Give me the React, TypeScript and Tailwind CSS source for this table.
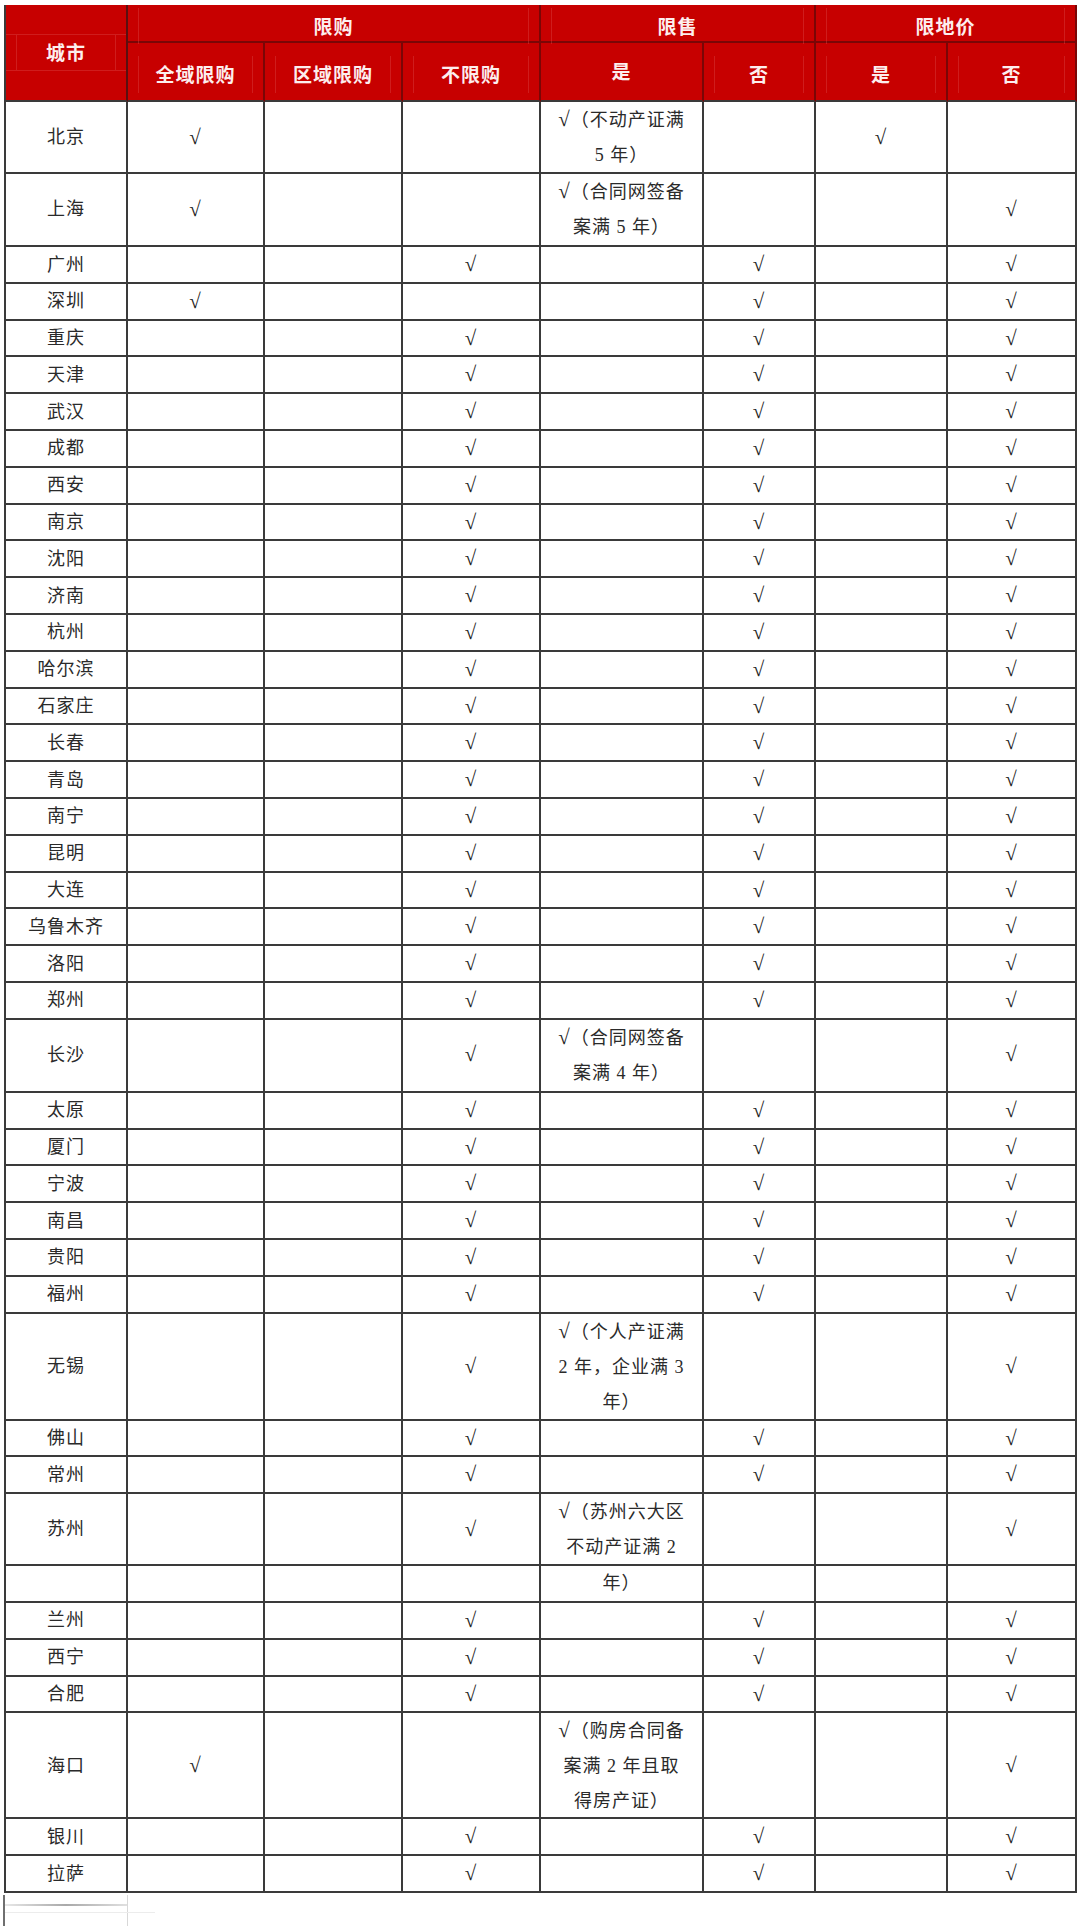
const COLS = "grid grid-cols-[122px_137px_138px_138px_163px_112px_132px_129px]";
const LINE = "border-[#3a3a3a]";
const V = "√";

type Cell = string | string[];

interface Row {
  city: string;
  cells: Cell[];
  h: string;
}

const STD: Cell[] = ["", "", V, "", V, "", V];

const single = (city: string): Row => ({ city, cells: STD, h: "h-[36.8px]" });

const ROWS: Row[] = [
  { city: "北京", cells: [V, "", "", ["√（不动产证满", "5 年）"], "", V, ""], h: "h-[72px]" },
  { city: "上海", cells: [V, "", "", ["√（合同网签备", "案满 5 年）"], "", "", V], h: "h-[73px]" },
  single("广州"),
  { city: "深圳", cells: [V, "", "", "", V, "", V], h: "h-[36.8px]" },
  ...[
    "重庆", "天津", "武汉", "成都", "西安", "南京", "沈阳", "济南", "杭州", "哈尔滨",
    "石家庄", "长春", "青岛", "南宁", "昆明", "大连", "乌鲁木齐", "洛阳", "郑州",
  ].map(single),
  { city: "长沙", cells: ["", "", V, ["√（合同网签备", "案满 4 年）"], "", "", V], h: "h-[73px]" },
  ...["太原", "厦门", "宁波", "南昌", "贵阳", "福州"].map(single),
  {
    city: "无锡",
    cells: ["", "", V, ["√（个人产证满", "2 年，企业满 3", "年）"], "", "", V],
    h: "h-[107px]",
  },
  single("佛山"),
  single("常州"),
  { city: "苏州", cells: ["", "", V, ["√（苏州六大区", "不动产证满 2"], "", "", V], h: "h-[72px]" },
  { city: "", cells: ["", "", "", "年）", "", "", ""], h: "h-[36.8px]" },
  ...["兰州", "西宁", "合肥"].map(single),
  {
    city: "海口",
    cells: [V, "", "", ["√（购房合同备", "案满 2 年且取", "得房产证）"], "", "", V],
    h: "h-[106px]",
  },
  single("银川"),
  single("拉萨"),
];

// faint inner edges left over from the original document's cell padding
function HeadText({ children, edges = true }: { children: string; edges?: boolean }) {
  return (
    <div
      className={
        edges
          ? "flex h-full items-center justify-center mx-[10px] my-[3px] border-x border-[#dd4848]/40"
          : "flex h-full items-center justify-center"
      }
    >
      {children}
    </div>
  );
}

function Header() {
  const head = "border-r-2 border-b-2 border-[#7a0606]";
  const sub = "border-r-2 border-b-2 border-r-[#7a0606] border-b-[#3a3a3a] py-[10px]";
  return (
    <div
      className={`${COLS} grid-rows-[38px_59px] bg-[#c70000] text-[19px] font-bold text-[#fdeeee] font-['Noto_Sans_CJK_SC',sans-serif]`}
    >
      <div className="row-span-2 flex flex-col justify-center border-r-2 border-b-2 border-r-[#5a1010] border-b-[#3a3a3a]">
        <div className="h-[37px] border-y border-[#dd4848]/40">
          <div className="mx-[10px] flex h-full items-center justify-center border-x border-[#dd4848]/40">
            城市
          </div>
        </div>
      </div>
      <div className={`col-span-3 ${head}`}>
        <HeadText>限购</HeadText>
      </div>
      <div className={`col-span-2 ${head}`}>
        <HeadText>限售</HeadText>
      </div>
      <div className={`col-span-2 ${head}`}>
        <HeadText>限地价</HeadText>
      </div>
      <div className={sub}>
        <HeadText>全域限购</HeadText>
      </div>
      <div className={sub}>
        <HeadText>区域限购</HeadText>
      </div>
      <div className={sub}>
        <HeadText>不限购</HeadText>
      </div>
      <div className={sub}>
        <HeadText edges={false}>是</HeadText>
      </div>
      <div className={sub}>
        <HeadText>否</HeadText>
      </div>
      <div className={sub}>
        <HeadText>是</HeadText>
      </div>
      <div className={sub}>
        <HeadText>否</HeadText>
      </div>
    </div>
  );
}

function Line({ text }: { text: string }) {
  if (!text.startsWith(V)) return <span className="block whitespace-nowrap">{text}</span>;
  return (
    <span className="block whitespace-nowrap">
      <span className="text-[21px] text-[#1f1f1f]">{V}</span>
      {text.slice(1)}
    </span>
  );
}

function BodyCell({ value }: { value: Cell }) {
  const lines = Array.isArray(value) ? value : value ? [value] : [];
  return (
    <div className={`flex flex-col items-center justify-center border-r-2 ${LINE} leading-[35px]`}>
      {lines.map((line, i) => (
        <Line key={i} text={line} />
      ))}
    </div>
  );
}

export default function App() {
  return (
    <div className="min-h-[1929px] bg-white pt-[5px]">
      <div
        className={`ml-[4px] w-[1073px] border-l-2 ${LINE} text-[18px] tracking-[1px] text-[#2a2a2a] font-['Liberation_Serif','Noto_Sans_CJK_SC',serif]`}
      >
        <Header />
        {ROWS.map((row, i) => (
          <div key={i} className={`${COLS} ${row.h} border-b-2 ${LINE}`}>
            <BodyCell value={row.city} />
            {row.cells.map((c, j) => (
              <BodyCell key={j} value={c} />
            ))}
          </div>
        ))}
      </div>

      {/* torn edge of the next table peeking in at the bottom */}
      <div className="ml-[3px] mt-[2px] flex h-[31px] w-[240px] border-l-2 border-[#6f6f6f]">
        <div className="w-[123px] border-r border-[#d8d8d8] pt-[9px]">
          <div className="h-[2px] bg-linear-to-r from-[#e8e8e8] via-[#a9a9a9] to-[#e0e0e0]" />
          <div className="mt-[6px] h-px w-[150px] bg-[#ececec]" />
        </div>
      </div>
    </div>
  );
}
